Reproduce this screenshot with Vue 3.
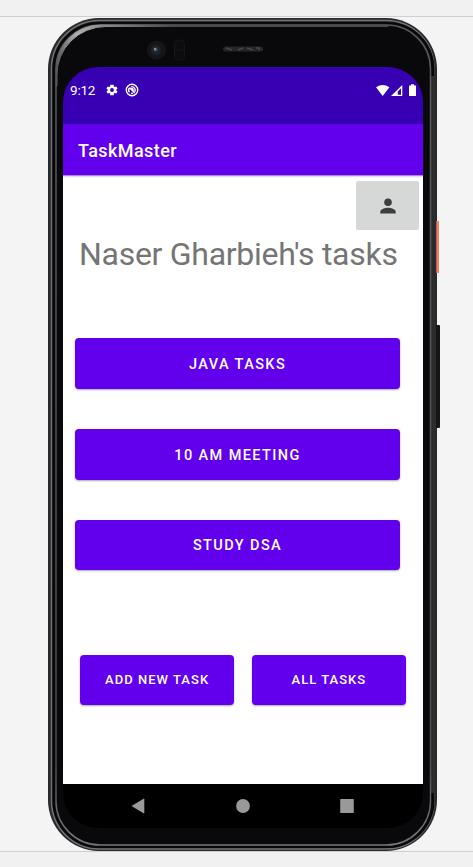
<script setup>
const tasks = ['Java Tasks', '10 AM Meeting', 'Study DSA']
</script>

<template>
  <div class="stage">
    <div class="phone">
      <svg class="frame" width="394" height="834" viewBox="0 0 394 834" aria-hidden="true">
        <defs>
          <linearGradient id="corner" x1="0" y1="0" x2="1" y2="0">
            <stop offset="0" stop-color="#55565a" />
            <stop offset=".06" stop-color="#b0b0ae" />
            <stop offset=".15" stop-color="#8a8a88" />
            <stop offset=".35" stop-color="#4b4b4b" />
            <stop offset="1" stop-color="#4b4b4d" />
          </linearGradient>
          <linearGradient id="fade" x1="0" y1="0" x2="0" y2="1">
            <stop offset="0" stop-color="#55565a" />
            <stop offset=".08" stop-color="#5a5b5d" />
            <stop offset=".9" stop-color="#4c4d4f" />
            <stop offset="1" stop-color="#77777b" />
          </linearGradient>
        </defs>
        <rect x="0" y="0" width="389" height="833" rx="51" fill="#28292b" />
        <rect x="3.500" y="2.500" width="382.500" height="828.500" rx="48" fill="#1d1e20" stroke="#727377" stroke-width="1.500" />
        <rect x="4.500" y="4" width="382" height="826" rx="47" fill="#08080a" />
        <path d="M385.500 58V775" stroke="#2b2c2e" stroke-width="5" />
        <rect x="8" y="7" width="374.500" height="820" rx="44" fill="#09080b" stroke="url(#fade)" stroke-width="1.500" />
        <path d="M8 68V53A45 45 0 0 1 53 7H340V8.500H58A49 48 0 0 0 9 58V68z" fill="url(#corner)" stroke="url(#corner)" />
        <rect x="388" y="203" width="3" height="52" rx=".5" fill="#ef7d62" />
        <path d="M388.500 203v52" stroke="#c95e48" />
        <rect x="388" y="307" width="4" height="103" rx="1" fill="#151618" />
        <circle cx="108.500" cy="32" r="9.500" fill="#151517" />
        <circle cx="108" cy="32" r="5" fill="#1d222b" />
        <circle cx="107.500" cy="31.500" r="2" fill="#46536a" />
        <circle cx="107" cy="31" r=".8" fill="#c2cedf" />
        <rect x="126.500" y="22" width="10" height="20" rx="4" fill="#0c0c0e" stroke="#161618" />
        <path d="M127 32h9" stroke="#161618" />
        <rect x="175" y="28.500" width="40" height="5" rx="2.500" fill="#262626" />
        <path d="M178 30l6 2M190 32l5-2M199 30l6 2M208 30h3v2" fill="none" stroke="#484848" stroke-width="1.500" />
      </svg>

      <div class="screen">
        <header class="status">
          <span class="time">9:12</span>
          <svg class="gear" width="14" height="14" viewBox="0 0 24 24">
            <path fill="#fff" fill-rule="evenodd" d="M19.400 13a7.500 7.500 0 0 0 0-2l2.100-1.700-2-3.500-2.500 1a7.700 7.700 0 0 0-1.700-1L14.900 3H9.100l-.4 2.800a7.700 7.700 0 0 0-1.700 1l-2.500-1-2 3.500L4.600 11a7.500 7.500 0 0 0 0 2l-2.100 1.700 2 3.500 2.500-1a7.700 7.700 0 0 0 1.700 1l.4 2.800h5.800l.4-2.800a7.700 7.700 0 0 0 1.700-1l2.500 1 2-3.500zM12 15.400a3.400 3.400 0 1 1 0-6.800 3.400 3.400 0 0 1 0 6.800z" />
          </svg>
          <svg class="badge" width="14" height="14" viewBox="0 0 14 14" fill="none" stroke="#fff">
            <circle cx="7" cy="7" r="5.700" stroke-width="1.400" />
            <path d="M4.500 9.300A3.300 3.300 0 0 1 4.400 5M6.200 3.800A3.300 3.300 0 0 1 9.800 8.600M6 10.100a3.300 3.300 0 0 0 2 .1M4.500 4.700l5.300 5.300" stroke-width="1.300" />
            <path d="M4.800 4.600l3.400.5 1.300 3.600z" fill="#fff" stroke="none" />
          </svg>
          <svg class="signals" width="41" height="14" viewBox="0 0 41 14" fill="#fff">
            <path d="M0 3.300Q6.700-1.300 13.400 3.300L6.700 12z" />
            <path fill-rule="evenodd" d="M26.300 1v11H15zM25 4.300L21.800 7.500v3.300H25z" />
            <path d="M33 1.500h2V.3h3v1.200h2V12h-7z" />
          </svg>
        </header>

        <div class="appbar">TaskMaster</div>

        <main class="content">
          <button class="profile" aria-label="Profile">
            <svg width="24" height="24" viewBox="0 0 24 24" fill="#3e3e3e">
              <circle cx="12" cy="8.300" r="3.800" />
              <path d="M4.300 19.600v-1.900c0-2.500 5.100-3.900 7.700-3.900s7.700 1.400 7.700 3.900v1.900z" />
            </svg>
          </button>
          <h1 class="title">Naser Gharbieh's tasks</h1>
          <div class="tasks">
            <button v-for="task in tasks" :key="task" class="btn">{{ task }}</button>
          </div>
          <div class="actions">
            <button class="btn small">Add new task</button>
            <button class="btn small">All tasks</button>
          </div>
        </main>

        <nav class="nav">
          <svg width="14" height="16" viewBox="0 0 14 16"><path d="M.5 8L12.500.8q.8-.4.8.5v13.400q0 .9-.8.5z" fill="#999" /></svg>
          <svg width="14" height="16" viewBox="0 0 14 16"><circle cx="7" cy="8" r="6.900" fill="#999" /></svg>
          <svg width="14" height="16" viewBox="0 0 14 16"><rect x=".2" y="1" width="13.600" height="14" rx=".7" fill="#999" /></svg>
        </nav>
      </div>
    </div>
  </div>
</template>

<style>
body {
  margin: 0;
  background: #f4f4f4;
}
</style>

<style scoped>
.stage {
  box-sizing: border-box;
  width: 473px;
  height: 867px;
  padding: 18px 0 0 48px;
  overflow: hidden;
  background: linear-gradient(#f1f1f1 16px, #cfcfcf 16px, #cfcfcf 17px, #f4f4f4 17px, #f4f4f4 851px, #cfcfcf 851px, #cfcfcf 852px, #f1f1f1 852px);
  font-family: Roboto, "Liberation Sans", sans-serif;
}
.phone {
  position: relative;
  box-sizing: border-box;
  width: 389px;
  height: 833px;
  padding: 49px 14px 0 15px;
}
.frame {
  position: absolute;
  left: 0;
  top: 0;
}
.screen {
  position: relative;
  width: 360px;
  height: 761px;
  display: flex;
  flex-direction: column;
  overflow: hidden;
  border-radius: 35px;
  background: #000;
}
.status {
  box-sizing: border-box;
  height: 57px;
  padding: 17px 6px 0 7px;
  display: flex;
  align-items: flex-start;
  background: #3800b3;
  color: #fff;
}
.time {
  width: 35px;
  margin-top: -2px;
  font-size: 13.500px;
  line-height: 16px;
  letter-spacing: -.2px;
}
.gear,
.badge {
  margin-top: -1.500px;
}
.badge {
  margin-left: 6px;
}
.signals {
  margin-left: auto;
  margin-top: -.5px;
}
.appbar {
  height: 51px;
  padding-left: 15px;
  position: relative;
  background: #6200ee;
  box-shadow: 0 1px 1px rgba(98, 0, 238, .4), 0 1px 3px rgba(0, 0, 0, .2);
  color: #fff;
  font-size: 18px;
  font-weight: 500;
  line-height: 54px;
  letter-spacing: .42px;
}
.content {
  height: 609px;
  display: flex;
  flex-direction: column;
  background: #fff;
}
button {
  border: 0;
  padding: 0;
  font-family: inherit;
}
.profile {
  align-self: flex-end;
  width: 63px;
  height: 49px;
  margin: 6px 4px 0 0;
  display: grid;
  place-items: center;
  border-radius: 2px;
  background: #d6d7d7;
}
.title {
  margin: 4px 0 0 16px;
  color: #757575;
  font-size: 32px;
  font-weight: 400;
  line-height: 40px;
  letter-spacing: -.28px;
  white-space: nowrap;
}
.tasks {
  margin: 64px 23px 0 12px;
  display: grid;
  gap: 40px;
}
.btn {
  height: 50.800px;
  padding-top: 3px;
  border-radius: 4px;
  background: #6200ee;
  box-shadow: 0 1px 2px rgba(0, 0, 0, .35);
  color: #fff;
  font-size: 14.500px;
  font-weight: 500;
  line-height: 20px;
  letter-spacing: 1.400px;
  text-transform: uppercase;
}
.actions {
  margin: 84.600px 17px 0;
  display: grid;
  grid-template-columns: 1fr 1fr;
  gap: 17.500px;
}
.small {
  height: 50px;
  padding-top: 1px;
  font-size: 13px;
  letter-spacing: 1.020px;
}
.nav {
  height: 44px;
  padding: 0 69px 0 68px;
  display: flex;
  align-items: center;
  justify-content: space-between;
}
</style>
